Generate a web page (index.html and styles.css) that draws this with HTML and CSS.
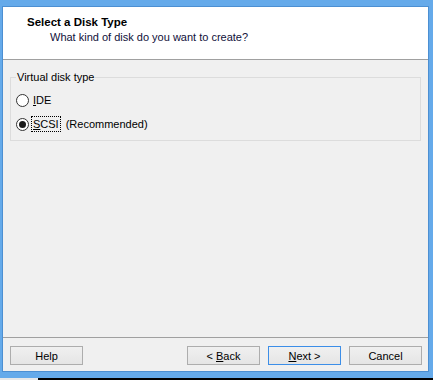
FILE: index.html
```html
<!DOCTYPE html>
<html lang="en">
<head>
    <meta charset="UTF-8">
    <meta name="viewport" content="width=device-width, initial-scale=1.0">
    <title>New Virtual Machine Wizard</title>
    <link rel="stylesheet" href="styles.css">
</head>
<body>
    <div class="window">
        <div class="dialog">
            <header class="wizard-header">
                <h1 class="wizard-title">Select a Disk Type</h1>
                <p class="wizard-subtitle">What kind of disk do you want to create?</p>
            </header>

            <main class="wizard-body">
                <fieldset class="group">
                    <legend class="group-label">Virtual disk type</legend>
                    <label class="radio-row">
                        <span class="radio"></span>
                        <span class="radio-text"><u>I</u>DE</span>
                    </label>
                    <label class="radio-row">
                        <span class="radio checked"></span>
                        <span class="radio-text focused"><u>S</u>CSI</span>
                        <span class="radio-note">(Recommended)</span>
                    </label>
                </fieldset>
            </main>

            <footer class="wizard-footer">
                <button class="btn">Help</button>
                <div class="nav-buttons">
                    <button class="btn">&lt; <u>B</u>ack</button>
                    <button class="btn default"><u>N</u>ext &gt;</button>
                    <button class="btn">Cancel</button>
                </div>
            </footer>
        </div>
    </div>
    <div class="taskbar">
        <div class="taskbar-start"></div>
    </div>
</body>
</html>
```

FILE: styles.css
```css
body {
    margin: 0;
    padding: 0;
    width: 433px;
    height: 380px;
    overflow: hidden;
    background-color: #000;
    font-family: "Liberation Sans", Arial, sans-serif;
    font-size: 11px;
    color: #000;
}

.window {
    box-sizing: border-box;
    height: 378px;
    padding: 6px 4px 6px 2px;
    background-color: #65aaea;
}

.dialog {
    box-sizing: border-box;
    height: 366px;
    border: 1px solid #4c8fd2;
    background-color: #f0f0f0;
    display: flex;
    flex-direction: column;
}

.wizard-header {
    height: 53px;
    box-sizing: border-box;
    padding: 8px 0 0 24px;
    background-color: #fff;
    border-bottom: 1px solid #a0a0a0;
}

.wizard-title {
    margin: 0;
    font-size: 11.5px;
    font-weight: bold;
    line-height: 15px;
}

.wizard-subtitle {
    margin: 0;
    padding-left: 23px;
    line-height: 15px;
    color: #10103a;
}

.wizard-body {
    flex: 1;
    padding: 10px 7px 0 7px;
}

.group {
    margin: 0;
    padding: 4px 0 4px 5px;
    border: 1px solid #dcdcdc;
    min-width: 0;
}

.group-label {
    padding: 0 1px;
    margin-left: 0;
    line-height: 14px;
    color: #000;
}

.radio-row {
    display: flex;
    align-items: center;
    height: 24px;
}

.radio {
    box-sizing: border-box;
    width: 13px;
    height: 13px;
    border: 1px solid #333;
    border-radius: 50%;
    background-color: #fff;
    display: flex;
    align-items: center;
    justify-content: center;
    margin-right: 2px;
}

.radio.checked::after {
    content: "";
    width: 7px;
    height: 7px;
    border-radius: 50%;
    background-color: #1a1a1a;
}

.radio-text {
    padding: 0 1px;
    line-height: 14px;
    border: 1px solid transparent;
}

.radio-text.focused {
    border: 1px dotted #000;
}

.radio-note {
    margin-left: 5px;
}

.wizard-footer {
    height: 34px;
    box-sizing: border-box;
    border-top: 1px solid #a0a0a0;
    padding: 8px 6px 0 7px;
    display: flex;
    justify-content: space-between;
    align-items: flex-start;
}

.nav-buttons {
    display: flex;
    gap: 8px;
}

.btn {
    box-sizing: border-box;
    width: 73px;
    height: 19px;
    padding: 0;
    border: 1px solid #adadad;
    background: linear-gradient(#f0f0f0, #e5e5e5);
    font-family: inherit;
    font-size: 11px;
    line-height: 16px;
    color: #000;
}

.btn.default {
    border-color: #3c8ee8;
}

.taskbar {
    height: 2px;
    display: flex;
}

.taskbar-start {
    width: 38px;
    background-color: #e8e8e8;
}
```
